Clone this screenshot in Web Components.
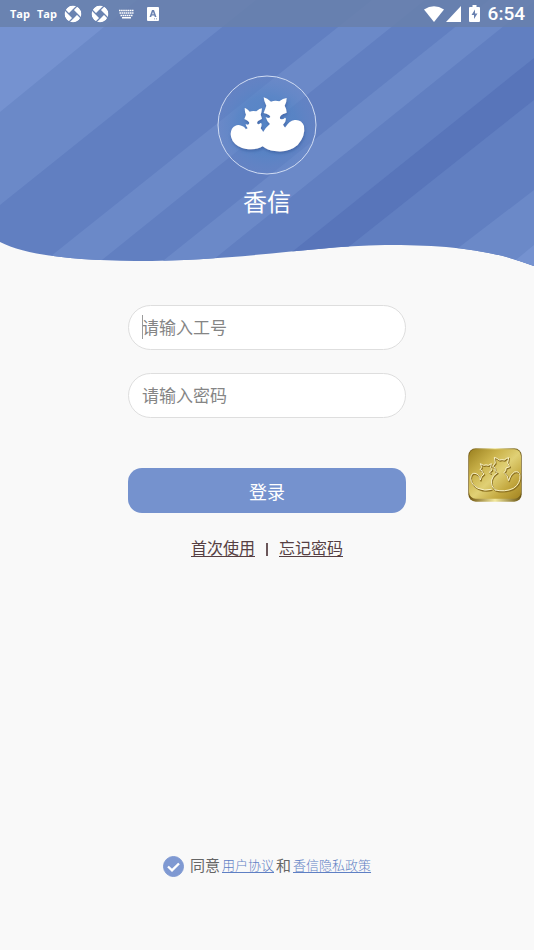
<!DOCTYPE html>
<html lang="zh-CN">
<head>
<meta charset="utf-8">
<meta name="viewport" content="width=device-width, initial-scale=1">
<title>香信</title>
<style>
html, body { margin: 0; }
body { background: #f9f9f9; font-family: Roboto, "Noto Sans CJK SC", sans-serif; }
</style>
</head>
<body>
<login-page></login-page>
<script>
const define = (name, html, setup) => customElements.define(name, class extends HTMLElement {
  connectedCallback() {
    if (this.shadowRoot) return;
    const t = document.createElement('template');
    t.innerHTML = '<style>*{box-sizing:border-box}</style>' + html;
    this.attachShadow({ mode: 'open' }).append(t.content.cloneNode(true));
    if (setup) setup(this, this.shadowRoot);
  }
});

define('shutter-icon', `
<style>
:host { display: block; width: 18px; height: 18px; }
svg { display: block; }
</style>
<svg width="18" height="18" viewBox="0 0 18 18">
  <mask id="m"><circle cx="9" cy="9" r="8.500" fill="#fff"/><path d="M9 4.800 13.200 9 9 13.200 4.800 9Z" fill="#000"/><path d="M5 9 13.500 .500M9 5 17.500 13.500M13 9 4.500 17.500M9 13 .500 4.500" stroke="#000" stroke-width="1.300"/></mask>
  <circle cx="9" cy="9" r="8.500" fill="#fff" mask="url(#m)"/>
</svg>`);

define('status-bar', `
<style>
:host { display: flex; align-items: center; justify-content: space-between; height: 27px; padding: 0 9px 0 10px; background: rgba(104,128,171,.85); color: #fff; }
div { display: flex; align-items: center; }
.left { gap: 7px; }
.right { gap: 2px; }
b { font: 700 11px/16px "Open Sans", sans-serif; width: 20px; }
time { font: 500 19px/26px Roboto, sans-serif; padding-left: 6px; }
svg { display: block; fill: #fff; }
.battery { margin-left: 6px; }
shutter-icon { margin-right: 2px; }
.keys { margin-right: 5px; }
</style>
<div class="left">
  <b>Tap</b><b>Tap</b>
  <shutter-icon></shutter-icon><shutter-icon></shutter-icon>
  <svg class="keys" width="17" height="10" viewBox="0 0 17 10"><path d="M1 1.500H16M1.500 4H15.500M2.500 6.500H14.500" stroke="#fff" stroke-width="1.700" stroke-dasharray="1.600 .5"/><path d="M4 8H13V9.500H4Z"/></svg>
  <svg width="12" height="14" viewBox="0 0 12 14"><path fill-rule="evenodd" d="M1 0H11Q12 0 12 1V13Q12 14 11 14H1Q0 14 0 13V1Q0 0 1 0ZM5 3 2.500 10H4.200L4.700 8.500H7.300L7.800 10H9.500L7 3ZM6 4.800 6.800 7.200H5.200ZM7 11.500V12.300H8V11.500ZM9 11.500V12.300H10V11.500Z"/></svg>
</div>
<div class="right">
  <svg width="20" height="16" viewBox="0 0 20 16"><path d="M0 3.500Q10-3 20 3.500L10 16Z"/></svg>
  <svg width="15" height="16" viewBox="0 0 15 16"><path d="M15 0V16H0Z"/></svg>
  <svg class="battery" width="11" height="17" viewBox="0 0 11 17"><path fill-rule="evenodd" d="M3.500 0H7.500V2H10Q11 2 11 3V16Q11 17 10 17H1Q0 17 0 16V3Q0 2 1 2H3.500ZM6 4.500 2.500 10H5V14L8.500 8.500H6Z"/></svg>
  <time>6:54</time>
</div>`);

define('fox-logo', `
<style>
:host { display: block; width: 100px; height: 100px; }
svg { display: block; width: 100%; height: 100%; }
</style>
<svg viewBox="31 27 298 300" role="img" aria-label="香信">
  <defs><radialGradient id="g"><stop offset="0" stop-color="#5585c6"/><stop offset=".6" stop-color="#5585c6" stop-opacity=".7"/><stop offset="1" stop-color="#6888c8" stop-opacity=".35"/></radialGradient>
  <filter id="s" x="-20%" y="-20%" width="140%" height="150%"><feDropShadow dx="2" dy="6" stdDeviation="5" flood-color="#3c62a4" flood-opacity=".8"/></filter></defs>
  <circle cx="180" cy="177" r="147" fill="url(#g)" stroke="#d0dcf3" stroke-width="3"/>
  <g fill="#fff" filter="url(#s)">
    <path d="M113 126Q118 126 128 137Q137 133 148 136Q158 127 165 127Q164 138 161 146L165 158L153 165Q148 170 152 174Q157 176 160 171L164 173Q164 181 161 187Q172 200 174 220L168 240Q148 253 118 249Q91 245 77 225Q66 205 75 188Q87 173 103 179Q116 184 116 190L122 187Q117 182 116 174Q125 179 127 171Q126 165 112 159L117 146Q113 138 113 126Z"/>
    <path d="M170 94Q180 96 192 107Q204 102 217 106Q228 97 239 96Q239 109 233 119Q238 127 239 140L227 145Q217 151 219 158Q227 163 234 155L237 158Q236 170 228 176Q234 186 235 184Q246 165 263 162Q284 160 291 180Q296 210 272 237Q244 261 203 255Q181 253 167 241Q158 220 168 199Q177 183 189 174Q180 167 176 153Q185 159 190 153Q189 145 170 141L178 119Q171 107 170 94Z"/>
  </g>
</svg>`);

define('brand-header', `
<style>
:host { display: grid; color: #fff; }
:host > * { grid-area: 1 / 1; }
.art { display: block; width: 100%; height: 268px; }
.content { display: flex; flex-direction: column; z-index: 1; }
.brand { display: flex; flex-direction: column; align-items: center; padding-top: 48px; gap: 10px; }
h1 { margin: 0; font-size: 24px; line-height: 36px; font-weight: 400; }
</style>
<svg class="art" viewBox="0 0 534 268" preserveAspectRatio="none" aria-hidden="true">
  <defs><clipPath id="wave"><path d="M0 0H534V266C488 248 440 245 385 245C310 246 242 261 135 261C70 260 25 255 0 242Z"/></clipPath></defs>
  <g clip-path="url(#wave)">
    <path fill="#617fc1" d="M0 0H534V268H0Z"/>
    <path fill="#6b89c8" d="M0 0H256L0 205ZM372 0H425L92 268H36ZM489 0H536L203 268H154ZM534 190V268H432Z"/>
    <path fill="#7592d0" d="M0 0H137L0 112ZM534 245V268H506Z"/>
    <path fill="#5875ba" d="M534 58V100L322 268H272Z"/>
  </g>
</svg>
<div class="content">
  <slot name="status"></slot>
  <div class="brand"><fox-logo></fox-logo><h1><slot></slot></h1></div>
</div>`);

define('text-field', `
<style>
:host { display: block; position: relative; }
input { display: block; width: 100%; height: 45px; padding: 0 13px; border: 1px solid #dedede; border-radius: 23px; background: #fff; color: #444; font: inherit; font-size: 17px; outline: 0; }
input::placeholder { color: #858585; opacity: 1; }
.caret { display: none; position: absolute; left: 14px; top: 10px; width: 1px; height: 24px; background: #9b9b9b; }
:host([active]) .caret { display: block; }
</style>
<input><span class="caret"></span>`, (el, root) => {
  const i = root.querySelector('input');
  i.type = el.getAttribute('type') || 'text';
  i.placeholder = el.getAttribute('label');
  i.setAttribute('aria-label', i.placeholder);
});

define('primary-button', `
<style>
:host { display: block; }
button { display: block; width: 100%; height: 45px; padding: 0; border: 0; border-radius: 14px; background: #7592ce; color: #fff; font: inherit; font-size: 18px; }
</style>
<button type="button"><slot></slot></button>`);

define('help-links', `
<style>
:host { display: flex; justify-content: center; align-items: center; gap: 11px; font-size: 16px; line-height: 24px; color: #563f43; }
a { color: inherit; text-underline-offset: 2px; text-decoration-thickness: 1px; white-space: nowrap; }
i { width: 2px; height: 13px; background: #6b575a; }
</style>
<a href="#first">首次使用</a><i></i><a href="#forgot">忘记密码</a>`);

define('agreement-row', `
<style>
:host { display: flex; justify-content: center; align-items: center; gap: 2px; font-size: 15px; line-height: 24px; color: #666; white-space: nowrap; }
.box { display: grid; margin-right: 4px; }
.box > * { grid-area: 1 / 1; width: 21px; height: 21px; margin: 0; }
input { appearance: none; border: 1px solid #7f99d2; border-radius: 50%; }
input:checked { background: #7f99d2; }
svg { pointer-events: none; }
input:not(:checked) + svg { visibility: hidden; }
a { color: #5f80c4; font-size: 13px; text-underline-offset: 2px; text-decoration-thickness: 1px; font-weight: 300; }
</style>
<span class="box"><input type="checkbox" id="agree" checked><svg viewBox="0 0 21 21" fill="none" stroke="#fff" stroke-width="2.400"><path d="M5 10.500 9 14.300 16 7.500"/></svg></span>
<label for="agree">同意</label><a href="#terms">用户协议</a><span>和</span><a href="#privacy">香信隐私政策</a>`);

define('gold-button', `
<style>
:host { display: block; width: 54px; height: 54px; }
button { display: block; width: 100%; height: 100%; padding: 0; border: 0; background: none; }
svg { display: block; width: 100%; height: 100%; }
</style>
<button type="button" aria-label="香信">
<svg viewBox="12 12 162 162">
  <defs>
    <linearGradient id="a" x1="0" y1="0" x2="1" y2="1"><stop offset="0" stop-color="#9b8120"/><stop offset=".3" stop-color="#cbb34b"/><stop offset=".52" stop-color="#e0d075"/><stop offset=".75" stop-color="#c4a940"/><stop offset="1" stop-color="#a38422"/></linearGradient>
    <linearGradient id="b" x1="0" x2="1"><stop offset="0" stop-color="#6d520b"/><stop offset=".5" stop-color="#f2e89d"/><stop offset="1" stop-color="#66500d"/></linearGradient>
    <path id="f" d="M82 136Q62 142 42 133Q21 122 20 103Q21 86 33 88Q47 91 49 108Q50 96 60 90Q53 87 54 80L48 77L53 70L49 59L59 64Q66 61 73 64L82 59L80 70L84 78L76 84L80 88M94 138Q80 128 83 108Q86 94 100 86Q91 82 93 72L86 67L94 57L91 40Q99 42 106 48Q114 46 121 48Q127 42 134 41L131 57L137 68L126 72Q127 81 120 85Q132 94 134 110Q138 92 151 84Q166 80 168 94Q170 119 148 133Q123 145 94 138"/>
  </defs>
  <rect x="13" y="13" width="160" height="160" rx="22" fill="url(#b)"/>
  <rect x="15" y="16" width="156" height="148" rx="20" fill="url(#a)"/>
  <g fill="none" stroke-linejoin="round" stroke-linecap="round"><use href="#f" stroke="#8b7020" stroke-width="4" x="2" y="3"/><use href="#f" stroke="#f8f1c6" stroke-width="3"/></g>
</svg></button>`);

define('login-page', `
<style>
:host { display: flex; flex-direction: column; min-height: 100vh; position: relative; }
form { display: flex; flex-direction: column; padding: 37px 128px 0; }
text-field + text-field { margin-top: 23px; }
primary-button { margin-top: 50px; }
help-links { margin-top: 24px; }
agreement-row { margin-top: auto; padding: 24px 0 72px; }
gold-button { position: absolute; right: 12px; top: 448px; }
</style>
<brand-header><status-bar slot="status"></status-bar>香信</brand-header>
<form>
  <text-field label="请输入工号" active></text-field>
  <text-field label="请输入密码" type="password"></text-field>
  <primary-button>登录</primary-button>
  <help-links></help-links>
</form>
<agreement-row></agreement-row>
<gold-button></gold-button>`);
</script>
</body>
</html>
